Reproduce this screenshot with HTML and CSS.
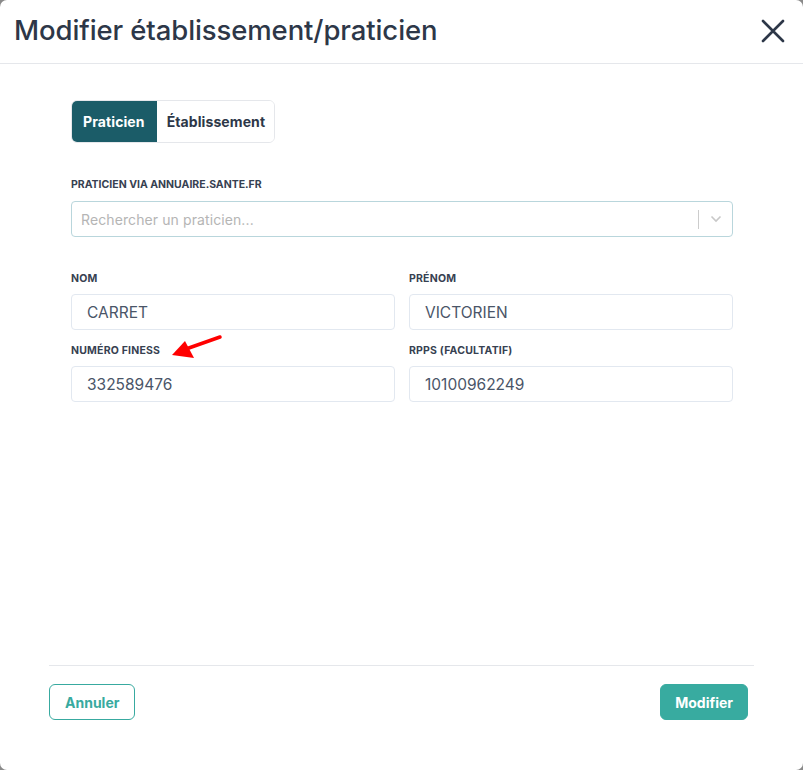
FILE: index.html
```html
<!DOCTYPE html>
<html lang="fr">
<head>
<meta charset="utf-8">
<title>Modifier établissement/praticien</title>
<link rel="stylesheet" href="styles.css">
</head>
<body>
<div class="modal">
  <header class="modal-header">
    <h1 class="modal-title">Modifier établissement/praticien</h1>
    <button class="close-btn" aria-label="Fermer">
      <svg width="24" height="24" viewBox="0 0 24 24"><path d="M2 2 L22 22 M22 2 L2 22" stroke="#2d3748" stroke-width="2.6" stroke-linecap="round" fill="none"/></svg>
    </button>
  </header>
  <main class="modal-body">
    <div class="toggle">
      <button class="toggle-btn active">Praticien</button>
      <button class="toggle-btn">Établissement</button>
    </div>
    <div class="field search-field">
      <label class="label">Praticien via annuaire.sante.fr</label>
      <div class="select">
        <span class="placeholder">Rechercher un praticien...</span>
        <span class="select-sep"></span>
        <span class="select-arrow">
          <svg width="12" height="8" viewBox="0 0 12 8"><path d="M1.5 1.5 L6 6 L10.5 1.5" stroke="#c8c8c8" stroke-width="1.6" fill="none"/></svg>
        </span>
      </div>
    </div>
    <div class="grid">
      <div class="field">
        <label class="label">Nom</label>
        <div class="input">CARRET</div>
      </div>
      <div class="field">
        <label class="label">Prénom</label>
        <div class="input">VICTORIEN</div>
      </div>
      <div class="field">
        <label class="label">Numéro FINESS</label>
        <div class="input">332589476</div>
      </div>
      <div class="field">
        <label class="label">RPPS (facultatif)</label>
        <div class="input">10100962249</div>
      </div>
    </div>
    <svg class="annot-arrow" width="60" height="34" viewBox="0 0 60 34">
      <line x1="54" y1="7" x2="20" y2="19" stroke="#ff0000" stroke-width="3.5" stroke-linecap="round"/>
      <polygon points="6,25 19,11 28,28" fill="#ff0000"/>
    </svg>
  </main>
  <footer class="modal-footer">
    <button class="btn btn-outline">Annuler</button>
    <button class="btn btn-primary">Modifier</button>
  </footer>
</div>
</body>
</html>
```
FILE: styles.css
```css
* { box-sizing: border-box; }
html, body { margin: 0; padding: 0; }
body {
  background: #8a8a8a;
  font-family: Inter, "Noto Sans", sans-serif;
  width: 803px;
  height: 770px;
  overflow: hidden;
}
.modal {
  width: 803px;
  height: 770px;
  background: #ffffff;
  border-radius: 7px;
  display: flex;
  flex-direction: column;
}
.modal-header {
  height: 64px;
  border-bottom: 1px solid #e5e7eb;
  display: flex;
  align-items: center;
  justify-content: space-between;
  padding: 0 18px 0 14px;
}
.modal-title {
  margin: 0;
  font-size: 27.5px;
  font-weight: 500;
  color: #2d3748;
  letter-spacing: -0.1px;
  padding-bottom: 3px;
}
.close-btn {
  background: none;
  border: 0;
  padding: 0;
  width: 24px;
  height: 24px;
  margin-bottom: 2px;
}
.modal-body {
  flex: 1;
  padding: 36px 70px 0 71px;
  position: relative;
}
.toggle {
  display: inline-flex;
  height: 43px;
  border: 1px solid #e5e7eb;
  border-radius: 6px;
  overflow: hidden;
}
.toggle-btn {
  border: 0;
  background: #fff;
  font-family: inherit;
  font-size: 14px;
  font-weight: 700;
  color: #2d3748;
  padding: 0 9px 0 10px;
  letter-spacing: 0.1px;
}
.toggle-btn.active {
  background: #1b5c68;
  color: #fff;
  padding: 0 12px 0 12px;
  margin: -1px 0 -1px -1px;
}
.field { display: flex; flex-direction: column; }
.label {
  font-size: 10.5px;
  font-weight: 700;
  text-transform: uppercase;
  color: #374151;
  line-height: 14px;
  margin-bottom: 8px;
  letter-spacing: 0.2px;
}
.search-field { margin-top: 35px; }
.search-field .label { margin-bottom: 9px; letter-spacing: 0; }
.select {
  height: 36px;
  border: 1px solid #b9d6dc;
  border-radius: 4px;
  display: flex;
  align-items: center;
  padding-left: 9px;
}
.placeholder {
  flex: 1;
  font-size: 14px;
  color: #b5b5b5;
  letter-spacing: 0.1px;
}
.select-sep {
  width: 1px;
  height: 19px;
  background: #cccccc;
}
.select-arrow {
  width: 33px;
  display: flex;
  justify-content: center;
  align-items: center;
}
.grid {
  margin-top: 35px;
  display: grid;
  grid-template-columns: 1fr 1fr;
  column-gap: 14px;
  row-gap: 14px;
}
.input {
  height: 36px;
  border: 1px solid #e2e8f0;
  border-radius: 4px;
  font-size: 15.5px;
  color: #4a5568;
  padding-left: 15px;
  display: flex;
  align-items: center;
}
.annot-arrow {
  position: absolute;
  left: 166px;
  top: 266px;
}
.modal-footer {
  margin: 0 49px;
  border-top: 1px solid #e5e7eb;
  padding: 18px 6px 50px 0;
  display: flex;
  justify-content: space-between;
}
.btn {
  height: 36px;
  border-radius: 6px;
  font-family: inherit;
  font-size: 14px;
  font-weight: 700;
  padding: 0 15px;
}
.btn-outline {
  background: #fff;
  border: 1px solid #38aaa0;
  color: #38aaa0;
}
.btn-primary {
  background: #38aba0;
  border: 1px solid #38aba0;
  color: #fff;
  padding: 0 14px;
}
```
